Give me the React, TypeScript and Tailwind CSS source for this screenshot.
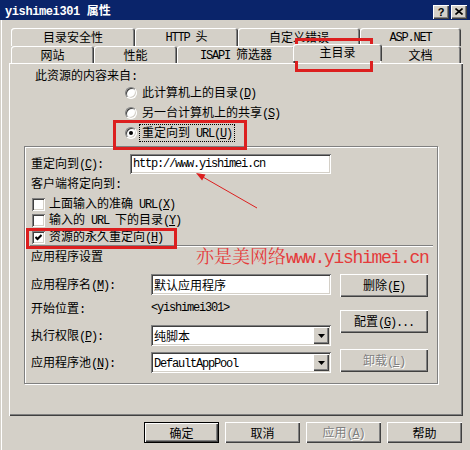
import type { ReactNode } from "react";

// win classic bevels
const raised =
  "bg-[#d4d0c8] shadow-[inset_1px_1px_0_#ffffff,inset_-1px_-1px_0_#404040,inset_-2px_-2px_0_#808080]";
const sunken =
  "bg-white shadow-[inset_1px_1px_0_#808080,inset_-1px_-1px_0_#ffffff,inset_2px_2px_0_#404040,inset_-2px_-2px_0_#d4d0c8]";
const disabledText = "text-[#808080] [text-shadow:1px_1px_0_#ffffff]";

// half-width latin, like SimSun
const M = ({ children }: { children: ReactNode }) => (
  <span className="font-['Liberation_Mono',monospace] tracking-[-1.2px]">{children}</span>
);

const Tab = ({ className = "", children }: { className?: string; children: ReactNode }) => (
  <div
    className={`flex h-full items-center justify-center rounded-t-[3px] bg-[#d4d0c8] shadow-[inset_1px_1px_0_#ffffff,inset_-1px_0_0_#404040,inset_-2px_0_0_#808080] ${className}`}
  >
    <span className="whitespace-pre">{children}</span>
  </div>
);

const Radio = ({ checked }: { checked?: boolean }) => (
  <span className="flex h-[12px] w-[12px] shrink-0 items-center justify-center rounded-full border border-t-[#808080] border-l-[#808080] border-r-white border-b-white bg-white shadow-[inset_1px_1px_0_#404040,inset_-1px_-1px_0_#d4d0c8]">
    {checked && <span className="h-[4px] w-[4px] rounded-full bg-black" />}
  </span>
);

const Check = ({ checked }: { checked?: boolean }) => (
  <span className={`flex h-[13px] w-[13px] shrink-0 items-center justify-center ${sunken}`}>
    {checked && (
      <svg width="7" height="7" viewBox="0 0 7 7">
        <path d="M0.5 3 L2.5 5 L6.5 1" stroke="#000" strokeWidth="2" fill="none" />
      </svg>
    )}
  </span>
);

const Select = ({ children }: { children: ReactNode }) => (
  <div className={`flex h-[21px] w-[180px] items-center pl-[3px] pr-[2px] ${sunken}`}>
    <span className="flex-1">{children}</span>
    <span className={`flex h-[17px] w-[16px] items-center justify-center ${raised}`}>
      <svg width="7" height="4" viewBox="0 0 7 4">
        <path d="M0 0h7L3.5 4z" fill="#000" />
      </svg>
    </span>
  </div>
);

const Btn = ({
  className = "",
  disabled,
  isDefault,
  children,
}: {
  className?: string;
  disabled?: boolean;
  isDefault?: boolean;
  children: ReactNode;
}) => (
  <div
    className={`flex items-center justify-center bg-[#d4d0c8] ${
      isDefault
        ? "shadow-[inset_0_0_0_1px_#000000,inset_2px_2px_0_#ffffff,inset_-2px_-2px_0_#404040,inset_-3px_-3px_0_#808080]"
        : raised
    } ${disabled ? disabledText : ""} ${className}`}
  >
    <span className="whitespace-pre">{children}</span>
  </div>
);

const App = () => {
  return (
    <div className="relative h-[450px] w-[470px] overflow-hidden bg-[#d4d0c8] font-['Noto_Sans_CJK_SC',sans-serif] text-[12px] leading-[14px] text-black shadow-[inset_1px_0_0_#d4d0c8,inset_2px_0_0_#ffffff]">
      {/* title bar */}
      <div className="flex h-[20px] items-center justify-between bg-[#0a246a] pl-[5px] pr-[3px]">
        <span className="pt-[2px] font-bold text-white">
          <span className="font-['Liberation_Mono',monospace] tracking-[-0.4px]">yishimei301 </span>属性
        </span>
        <div className="mt-[3px] flex gap-[2px]">
          <div className={`flex h-[14px] w-[16px] items-center justify-center font-['Liberation_Sans',sans-serif] text-[11px] font-bold ${raised}`}>
            ?
          </div>
          <div className={`flex h-[14px] w-[16px] items-center justify-center ${raised}`}>
            <svg width="8" height="7" viewBox="0 0 8 7">
              <path d="M0.5 0.5 L7.5 6.5 M7.5 0.5 L0.5 6.5" stroke="#000" strokeWidth="1.6" />
            </svg>
          </div>
        </div>
      </div>

      <div className="pl-[9px] pt-[8px]">
        {/* tabs */}
        <div className="ml-[2px] flex h-[18px]">
          <Tab className="w-[124px]">目录安全性</Tab>
          <Tab className="w-[103px]">
            <M>HTTP </M>头
          </Tab>
          <Tab className="w-[122px]">自定义错误</Tab>
          <Tab className="w-[101px]">
            <M>ASP.NET</M>
          </Tab>
        </div>
        <div className="ml-[2px] flex h-[17px]">
          <Tab className="w-[83px]">网站</Tab>
          <Tab className="w-[83px]">性能</Tab>
          <Tab className="w-[118px]">
            <M>ISAPI </M>筛选器
          </Tab>
          <Tab className="relative z-10 -mx-[2px] -mt-[2px] h-[20px] w-[89px] pb-[2px]">主目录</Tab>
          <Tab className="w-[81px]">文档</Tab>
        </div>

        {/* panel */}
        <div className={`h-[353px] w-[454px] ${raised}`}>
          <div className="box-content h-[14px] pl-[26px] pt-[5px]">
            此资源的内容来自<M>:</M>
          </div>
          <div className="ml-[116px] mt-[1px]">
            <div className="flex h-[20px] items-center gap-[5px]">
              <Radio />
              <span>
                此计算机上的目录<M>(<u>D</u>)</M>
              </span>
            </div>
            <div className="flex h-[20px] items-center gap-[5px]">
              <Radio />
              <span>
                另一台计算机上的共享<M>(<u>S</u>)</M>
              </span>
            </div>
            <div className="flex h-[20px] items-center gap-[3px]">
              <Radio checked />
              <span className="px-[2px] outline outline-1 outline-dotted outline-black">
                重定向到<M> URL(<u>U</u>)</M>
              </span>
            </div>
          </div>

          {/* group box */}
          <div className="ml-[15px] mt-[3px] h-[238px] w-[414px] border border-[#808080] shadow-[inset_1px_1px_0_#ffffff,1px_1px_0_#ffffff]">
            <div className="mt-[7px] flex h-[20px] items-center pl-[6px]">
              <span className="w-[99px]">
                重定向到<M>(<u>C</u>):</M>
              </span>
              <div className={`flex h-[20px] w-[201px] items-center pl-[3px] ${sunken}`}>
                <M>http://www.yishimei.cn</M>
              </div>
            </div>
            <div className="mt-[2px] h-[14px] pl-[6px]">
              客户端将定向到<M>:</M>
            </div>
            <div className="mt-[6px] flex h-[16px] items-center gap-[4px] pl-[7px] leading-[12px]">
              <Check />
              <span>
                上面输入的准确<M> URL(<u>X</u>)</M>
              </span>
            </div>
            <div className="flex h-[16px] items-center gap-[4px] pl-[7px] leading-[12px]">
              <Check />
              <span>
                输入的<M> URL </M>下的目录<M>(<u>Y</u>)</M>
              </span>
            </div>
            <div className="mt-[1px] flex h-[16px] items-center gap-[4px] pl-[7px] leading-[12px]">
              <Check checked />
              <span>
                资源的永久重定向<M>(<u>H</u>)</M>
              </span>
            </div>
            <div className="ml-[5px] h-[2px] w-[403px] border-t border-b border-t-[#808080] border-b-white" />
            <div className="mt-[2px] flex h-[14px] items-center pl-[6px]">
              <span>应用程序设置</span>
              <span className="ml-[93px] whitespace-nowrap font-['Noto_Serif_CJK_SC','Noto_Sans_CJK_SC',serif] text-[18px] leading-[20px] text-[#e43b3b]">
                亦是美网络
                <span className="font-['Liberation_Mono',monospace] tracking-[-1.3px]">www.yishimei.cn</span>
              </span>
            </div>

            <div className="mt-[11px] flex pl-[6px]">
              <div className="w-[300px]">
                <div className="flex h-[21px] items-center">
                  <span className="w-[120px]">
                    应用程序名<M>(<u>M</u>):</M>
                  </span>
                  <div className={`flex h-[21px] w-[180px] items-center pl-[3px] ${sunken}`}>默认应用程序</div>
                </div>
                <div className="flex h-[30px] items-center pb-[3px]">
                  <span className="w-[120px]">
                    开始位置<M>:</M>
                  </span>
                  <span className="-mt-[3px]">
                    <M>&lt;yishimei301&gt;</M>
                  </span>
                </div>
                <div className="flex h-[21px] items-center">
                  <span className="w-[120px]">
                    执行权限<M>(<u>P</u>):</M>
                  </span>
                  <Select>纯脚本</Select>
                </div>
                <div className="mt-[6px] flex h-[21px] items-center">
                  <span className="w-[120px]">
                    应用程序池<M>(<u>N</u>):</M>
                  </span>
                  <Select>
                    <M>DefaultAppPool</M>
                  </Select>
                </div>
              </div>
              <div className="ml-[9px] flex flex-col">
                <Btn className="h-[23px] w-[88px]">
                  删除<M>(<u>E</u>)</M>
                </Btn>
                <Btn className="mt-[13px] h-[23px] w-[88px]">
                  配置<M>(<u>G</u>)...</M>
                </Btn>
                <Btn className="mt-[16px] h-[23px] w-[88px]" disabled>
                  卸载<M>(<u>L</u>)</M>
                </Btn>
              </div>
            </div>
          </div>
        </div>

        {/* dialog buttons */}
        <div className="mt-[6px] flex gap-[6px] pl-[135px]">
          <Btn className="h-[21px] w-[75px]" isDefault>
            确定
          </Btn>
          <Btn className="h-[21px] w-[75px]">取消</Btn>
          <Btn className="h-[21px] w-[75px]" disabled>
            应用<M>(<u>A</u>)</M>
          </Btn>
          <Btn className="h-[21px] w-[75px]">帮助</Btn>
        </div>
      </div>

      {/* red annotations drawn over the screenshot */}
      <div className="absolute left-[295px] top-[38px] h-[34px] w-[78px] border-[3px] border-[#dc1f1f]" />
      <div className="absolute left-[113px] top-[120px] h-[30px] w-[134px] border-[3px] border-[#dc1f1f]" />
      <div className="absolute left-[26px] top-[228px] h-[21px] w-[151px] border-[3px] border-[#dc1f1f]" />
      <svg className="absolute left-0 top-0" width="470" height="450">
        <line x1="257" y1="208" x2="202" y2="176.5" stroke="#dc1f1f" strokeWidth="1" />
        <path d="M196 173 L205.5 174.5 L202.1 180.5 Z" fill="#dc1f1f" />
      </svg>
    </div>
  );
};

export default App;
